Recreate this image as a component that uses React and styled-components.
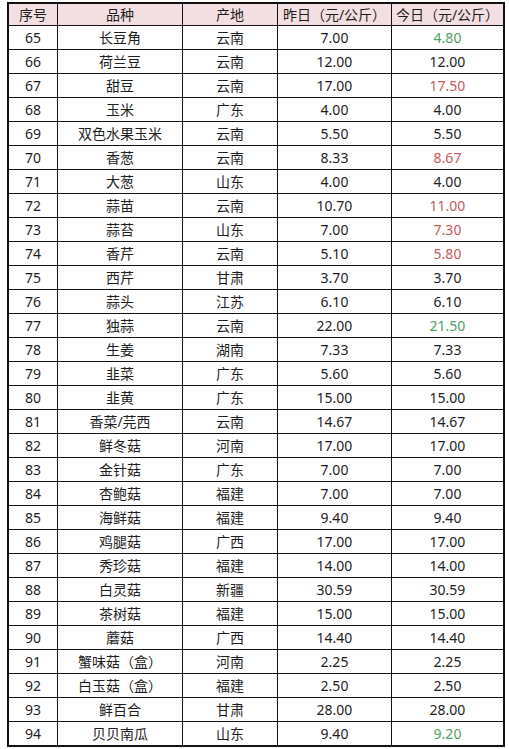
import React from 'react';
import styled, { createGlobalStyle } from 'styled-components';

const GlobalStyle = createGlobalStyle`
    html, body {
        margin: 0;
        padding: 0;
        background: #ffffff;
    }
    body {
        font-family: "Noto Sans", "Noto Sans CJK SC", sans-serif;
        color: #1e1e1e;
    }
`;

const Page = styled.div`
    padding: 2px 4px 0 7px;
`;

const Sheet = styled.div`
    width: 494px;
    border: 2px solid #111;
`;

const Row = styled.div`
    display: grid;
    grid-template-columns: 48px 125px 95px 114px 112px;
    height: ${p => (p.$head ? '21px' : '24px')};
    background: ${p => (p.$head ? '#f3dfe1' : '#ffffff')};
    border-top: ${p => (p.$head ? 'none' : '1px solid #111')};
    box-sizing: border-box;
`;

const Cell = styled.div`
    display: flex;
    align-items: center;
    justify-content: center;
    font-size: 14px;
    line-height: 1;
    white-space: nowrap;
    border-left: ${p => (p.$first ? 'none' : '1px solid #111')};
    color: ${p => (p.$tone === 'up' ? '#c65a5a' : p.$tone === 'down' ? '#4f9f68' : '#1e1e1e')};
    padding-top: 1px;
`;

const rows = [
    [65, '长豆角', '云南', '7.00', '4.80', 'down'],
    [66, '荷兰豆', '云南', '12.00', '12.00'],
    [67, '甜豆', '云南', '17.00', '17.50', 'up'],
    [68, '玉米', '广东', '4.00', '4.00'],
    [69, '双色水果玉米', '云南', '5.50', '5.50'],
    [70, '香葱', '云南', '8.33', '8.67', 'up'],
    [71, '大葱', '山东', '4.00', '4.00'],
    [72, '蒜苗', '云南', '10.70', '11.00', 'up'],
    [73, '蒜苔', '山东', '7.00', '7.30', 'up'],
    [74, '香芹', '云南', '5.10', '5.80', 'up'],
    [75, '西芹', '甘肃', '3.70', '3.70'],
    [76, '蒜头', '江苏', '6.10', '6.10'],
    [77, '独蒜', '云南', '22.00', '21.50', 'down'],
    [78, '生姜', '湖南', '7.33', '7.33'],
    [79, '韭菜', '广东', '5.60', '5.60'],
    [80, '韭黄', '广东', '15.00', '15.00'],
    [81, '香菜/芫西', '云南', '14.67', '14.67'],
    [82, '鲜冬菇', '河南', '17.00', '17.00'],
    [83, '金针菇', '广东', '7.00', '7.00'],
    [84, '杏鲍菇', '福建', '7.00', '7.00'],
    [85, '海鲜菇', '福建', '9.40', '9.40'],
    [86, '鸡腿菇', '广西', '17.00', '17.00'],
    [87, '秀珍菇', '福建', '14.00', '14.00'],
    [88, '白灵菇', '新疆', '30.59', '30.59'],
    [89, '茶树菇', '福建', '15.00', '15.00'],
    [90, '蘑菇', '广西', '14.40', '14.40'],
    [91, '蟹味菇（盒）', '河南', '2.25', '2.25'],
    [92, '白玉菇（盒）', '福建', '2.50', '2.50'],
    [93, '鲜百合', '甘肃', '28.00', '28.00'],
    [94, '贝贝南瓜', '山东', '9.40', '9.20', 'down'],
];

export default function App() {
    return (
        <Page>
            <GlobalStyle />
            <Sheet>
                <Row $head>
                    <Cell $first>序号</Cell>
                    <Cell>品种</Cell>
                    <Cell>产地</Cell>
                    <Cell>昨日（元/公斤）</Cell>
                    <Cell>今日（元/公斤）</Cell>
                </Row>
                {rows.map(([no, name, origin, prev, today, tone]) => (
                    <Row key={no}>
                        <Cell $first>{no}</Cell>
                        <Cell>{name}</Cell>
                        <Cell>{origin}</Cell>
                        <Cell>{prev}</Cell>
                        <Cell $tone={tone}>{today}</Cell>
                    </Row>
                ))}
            </Sheet>
        </Page>
    );
}
